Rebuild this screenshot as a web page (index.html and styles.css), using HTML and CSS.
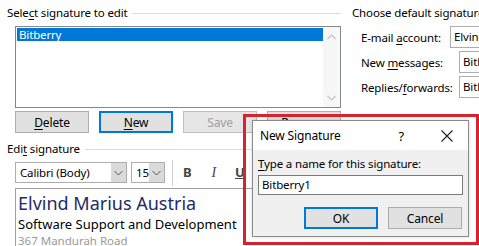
FILE: index.html
```html
<!DOCTYPE html>
<html lang="en">
<head>
    <meta charset="UTF-8">
    <title>Signatures and Stationery</title>
    <link rel="stylesheet" href="styles.css">
</head>
<body>
    <div class="window">
        <div class="left">
            <div class="group-title"><span>Sele<u>c</u>t signature to edit</span></div>
            <div class="listbox">
                <div class="list-items">
                    <div class="item selected">Bitberry</div>
                </div>
                <div class="scrollbar">
                    <svg width="9" height="6" viewBox="0 0 9 6"><path d="M0.5 5 L4.5 1 L8.5 5" fill="none" stroke="#c2c2c2" stroke-width="1.2"/></svg>
                    <svg width="9" height="6" viewBox="0 0 9 6"><path d="M0.5 1 L4.5 5 L8.5 1" fill="none" stroke="#c2c2c2" stroke-width="1.2"/></svg>
                </div>
            </div>
            <div class="btn-row">
                <button class="btn"><u>D</u>elete</button>
                <button class="btn default"><u>N</u>ew</button>
                <button class="btn" disabled>Save</button>
                <button class="btn">Rename</button>
            </div>
            <div class="group-title edit-title"><span>Edi<u>t</u> signature</span></div>
            <div class="toolbar">
                <div class="combo font-combo">
                    <span class="combo-text">Calibri (Body)</span>
                    <span class="combo-arrow"><svg width="9" height="6" viewBox="0 0 9 6"><path d="M0.5 1 L4.5 5 L8.5 1" fill="none" stroke="#555" stroke-width="1"/></svg></span>
                </div>
                <div class="combo size-combo">
                    <span class="combo-text">15</span>
                    <span class="combo-arrow"><svg width="9" height="6" viewBox="0 0 9 6"><path d="M0.5 1 L4.5 5 L8.5 1" fill="none" stroke="#555" stroke-width="1"/></svg></span>
                </div>
                <div class="sep"></div>
                <span class="tool tool-b">B</span>
                <span class="tool tool-i">I</span>
                <span class="tool tool-u">U</span>
            </div>
            <div class="editor">
                <div class="sig-name">Elvind Marius Austria</div>
                <div class="sig-role">Software Support and Development</div>
                <div class="sig-addr">367 Mandurah Road</div>
            </div>
        </div>
        <div class="right">
            <div class="group-title"><span>Choose default signature</span></div>
            <div class="fields">
                <div class="field">
                    <span class="field-label">E-mail <u>a</u>ccount:</span>
                    <span class="field-box">Elvind Marius Austria</span>
                </div>
                <div class="field">
                    <span class="field-label wide">New <u>m</u>essages:</span>
                    <span class="field-box">Bitberry</span>
                </div>
                <div class="field">
                    <span class="field-label wide">Replies/<u>f</u>orwards:</span>
                    <span class="field-box">Bitberry</span>
                </div>
            </div>
        </div>
    </div>

    <div class="highlight">
        <div class="dialog">
            <div class="dialog-title">
                <span class="dialog-name">New Signature</span>
                <span class="dialog-help">?</span>
                <svg class="dialog-close" width="12" height="12" viewBox="0 0 12 12"><path d="M0.5 0.5 L11.5 11.5 M11.5 0.5 L0.5 11.5" stroke="#222" stroke-width="1.1"/></svg>
            </div>
            <div class="dialog-body">
                <div class="dialog-label"><u>T</u>ype a name for this signature:</div>
                <div class="dialog-input">Bitberry1</div>
                <div class="dialog-buttons">
                    <button class="btn default">OK</button>
                    <button class="btn">Cancel</button>
                </div>
            </div>
        </div>
    </div>
</body>
</html>
```

FILE: styles.css
```css
body {
    margin: 0;
    width: 479px;
    height: 246px;
    overflow: hidden;
    background: #fff;
    font-family: "Noto Sans", "Open Sans", sans-serif;
    font-size: 11.5px;
    letter-spacing: -0.15px;
    color: #000;
    position: relative;
}
u {
    text-decoration-thickness: 1px;
    text-underline-offset: 2px;
}
.window {
    display: flex;
    padding: 5px 0 0 7px;
}
.left {
    width: 334px;
    flex: none;
}
.right {
    margin-left: 11px;
    flex: 1;
    white-space: nowrap;
}
.group-title {
    display: flex;
    align-items: center;
    height: 16px;
    line-height: 16px;
}
.group-title::after {
    content: "";
    flex: 1;
    border-top: 1px solid #dcdcdc;
    margin-left: 5px;
}
.listbox {
    margin: 5px 0 0 8px;
    height: 80px;
    border: 1px solid #828790;
    display: flex;
}
.list-items {
    flex: 1;
    padding: 1px 0 0 1px;
}
.item {
    height: 13px;
    line-height: 13px;
    padding-left: 2px;
}
.item.selected {
    background: #0078d7;
    color: #fff;
}
.scrollbar {
    width: 17px;
    display: flex;
    flex-direction: column;
    justify-content: space-between;
    align-items: center;
    padding: 7px 0 6px;
    background: #f7f7f7;
}
.btn-row {
    display: flex;
    gap: 10px;
    margin: 3px 0 0 8px;
}
.btn {
    width: 74px;
    height: 22px;
    padding: 0;
    background: #e1e1e1;
    border: 1px solid #adadad;
    font-family: inherit;
    font-size: 12px;
    letter-spacing: -0.15px;
    color: #000;
}
.btn.default {
    border: 2px solid #0078d7;
}
.btn:disabled {
    color: #a0a0a0;
    border-color: #bfbfbf;
    background: #e6e6e6;
}
.edit-title {
    margin-top: 8px;
}
.toolbar {
    display: flex;
    align-items: center;
    margin: 5px 0 0 8px;
    height: 21px;
}
.combo {
    display: flex;
    height: 21px;
    box-sizing: border-box;
    border: 1px solid #adadad;
    background: #fff;
}
.combo-text {
    flex: 1;
    padding-left: 4px;
    line-height: 19px;
}
.combo-arrow {
    width: 15px;
    background: #dadada;
    display: flex;
    align-items: center;
    justify-content: center;
}
.font-combo {
    width: 112px;
}
.size-combo {
    width: 34px;
    flex: none;
    margin-left: 4px;
}
.sep {
    width: 1px;
    height: 26px;
    background: #d0d0d0;
    margin: 0 10px 0 7px;
}
.tool {
    color: #444;
    font-size: 13px;
    line-height: 21px;
}
.tool-b {
    font-weight: bold;
}
.tool-i {
    font-family: "Liberation Serif", serif;
    font-style: italic;
    font-size: 14px;
    margin-left: 20px;
}
.tool-u {
    font-weight: bold;
    text-decoration: underline;
    margin-left: 19px;
}
.editor {
    margin: 5px 0 0 8px;
    width: 340px;
    height: 80px;
    border: 1px solid #a0a0a0;
    border-right: none;
    padding: 3px 0 0 2px;
    letter-spacing: 0;
}
.sig-name {
    font-size: 18px;
    line-height: 22px;
    color: #1f2a6a;
}
.sig-role {
    font-size: 13px;
    line-height: 18px;
    margin-top: 1px;
}
.sig-addr {
    font-size: 11.5px;
    line-height: 16px;
    color: #9a9a9a;
}
.fields {
    display: flex;
    flex-direction: column;
    gap: 3px;
    margin-top: 5px;
    padding-left: 9px;
}
.field {
    display: flex;
    align-items: center;
    height: 22px;
}
.field-label {
    width: 89px;
    flex: none;
}
.field-label.wide {
    width: 98px;
}
.field-box {
    height: 22px;
    box-sizing: border-box;
    border: 1px solid #adadad;
    padding-left: 3px;
    line-height: 20px;
    flex: none;
    width: 120px;
}
.highlight {
    position: absolute;
    left: 243px;
    top: 114px;
    width: 236px;
    height: 131px;
    box-sizing: border-box;
    border: 3px solid #d8232f;
    padding: 3px 0 0 6px;
}
.dialog {
    width: 217px;
    height: 117px;
    box-sizing: border-box;
    border: 1px solid #8a8a8a;
    background: #f0f0f0;
    box-shadow: 0 0 4px rgba(0, 0, 0, 0.15);
}
.dialog-title {
    height: 29px;
    background: #fff;
    display: flex;
    align-items: center;
    padding-left: 7px;
}
.dialog-name {
    flex: 1;
    font-size: 12px;
}
.dialog-help {
    font-size: 13px;
    margin-right: 37px;
}
.dialog-close {
    margin-right: 15px;
}
.dialog-body {
    padding: 6px 5px 0 5px;
}
.dialog-label {
    line-height: 16px;
}
.dialog-input {
    margin-top: 3px;
    height: 20px;
    box-sizing: border-box;
    border: 1px solid #7a7a7a;
    background: #fff;
    padding-left: 3px;
    line-height: 18px;
}
.dialog-buttons {
    display: flex;
    justify-content: flex-end;
    gap: 10px;
    margin-top: 12px;
    padding-right: 1px;
}
.dialog-buttons .btn {
    height: 22px;
}
```
